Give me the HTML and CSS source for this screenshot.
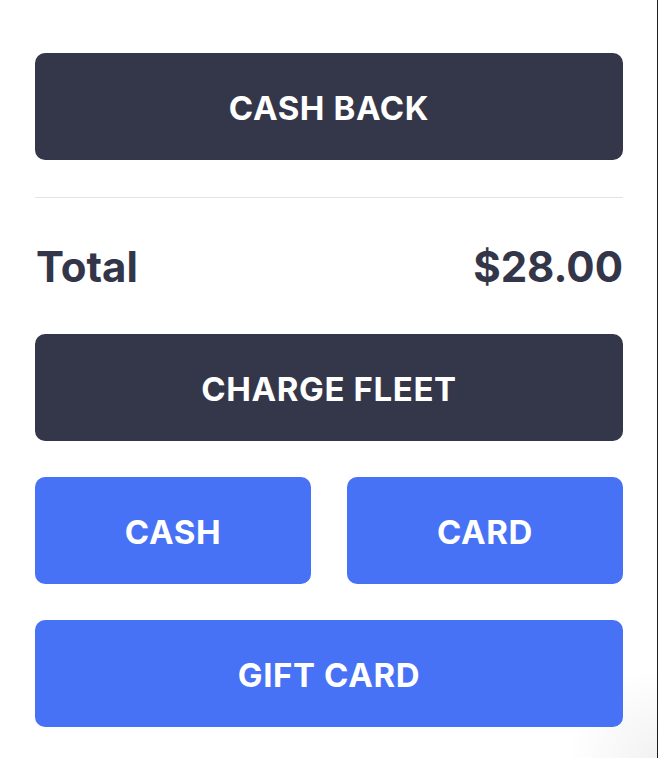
FILE: index.html
```html
<!DOCTYPE html>
<html>
<head>
<meta charset="utf-8">
<link rel="stylesheet" href="styles.css">
</head>
<body>
<div class="panel">
  <button class="btn btn-dark">CASH BACK</button>
  <div class="divider"></div>
  <div class="total-row">
    <span class="total-label">Total</span>
    <span class="total-value">$28.00</span>
  </div>
  <button class="btn btn-dark">CHARGE FLEET</button>
  <div class="pair">
    <button class="btn btn-blue">CASH</button>
    <button class="btn btn-blue">CARD</button>
  </div>
  <button class="btn btn-blue">GIFT CARD</button>
</div>
</body>
</html>
```

FILE: styles.css
```css
html, body {
  margin: 0;
  padding: 0;
  background: #ffffff;
  height: 100%;
}

body {
  font-family: Inter, "Noto Sans", "Liberation Sans", sans-serif;
  overflow: hidden;
}

.panel {
  box-sizing: border-box;
  width: 658px;
  height: 758px;
  padding: 53px 34px 0 35px;
  display: flex;
  flex-direction: column;
  gap: 36px;
  border-right: 1px solid #1c1d24;
  background:
    radial-gradient(ellipse 90px 90px at 100% 100%, rgba(0,0,0,0.05), rgba(0,0,0,0) 100%),
    #ffffff;
}

.btn {
  display: flex;
  align-items: center;
  justify-content: center;
  flex-shrink: 0;
  height: 107px;
  width: 100%;
  border: none;
  border-radius: 10px;
  color: #ffffff;
  font-family: Inter, "Noto Sans", "Liberation Sans", sans-serif;
  font-weight: 700;
  font-size: 33px;
  letter-spacing: 0.6px;
  padding: 2px 0 0 0;
  margin: 0;
}

.btn-dark {
  background: #343749;
}

.btn-blue {
  background: #4872f5;
}

.divider {
  flex-shrink: 0;
  height: 1px;
  background: #e3e4e8;
  margin-top: 1px;
}

.total-row {
  flex-shrink: 0;
  display: flex;
  justify-content: space-between;
  align-items: center;
  height: 64px;
  line-height: 64px;
  color: #333649;
  font-weight: 700;
  font-size: 42px;
  padding-top: 2px;
  box-sizing: border-box;
}

.total-label {
  padding-left: 1px;
}

.pair {
  flex-shrink: 0;
  display: flex;
  gap: 36px;
}

.pair .btn {
  flex: 1;
}
```
